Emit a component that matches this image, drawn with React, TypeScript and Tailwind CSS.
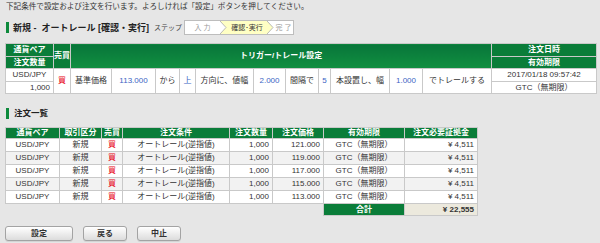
import React from "react";

const th = "border border-[#c9c9c9] bg-[#0a7d39] text-white font-bold text-center p-0";
const td = "border border-[#c9c9c9] bg-white text-center p-0";

function Steps() {
  return (
    <div className="ml-[2px] flex h-[15px] items-stretch border border-[#bdbdbd] bg-white text-[7px] leading-[13px]">
      <div className="flex w-[35px] items-center justify-center text-[#9a9a9a]">入 力</div>
      <svg width="7" height="13" viewBox="0 0 7 13" className="block">
        <rect x="0" y="0" width="7" height="13" fill="#ffffc4" />
        <polygon points="0,0 6,6.5 0,13" fill="#ffffff" />
        <polyline points="0,0 6,6.5 0,13" fill="none" stroke="#a8a8a8" strokeWidth="0.8" />
      </svg>
      <div className="flex w-[40px] items-center justify-center bg-[#ffffc4] text-[#333]">確認･実行</div>
      <svg width="7" height="13" viewBox="0 0 7 13" className="block">
        <rect x="0" y="0" width="7" height="13" fill="#ffffff" />
        <polygon points="0,0 6,6.5 0,13" fill="#ffffc4" />
        <polyline points="0,0 6,6.5 0,13" fill="none" stroke="#a8a8a8" strokeWidth="0.8" />
      </svg>
      <div className="flex w-[19px] items-center justify-center text-[#9a9a9a]">完 了</div>
    </div>
  );
}

function Btn({ label, w }: { label: string; w: string }) {
  return (
    <button
      className={`${w} h-[15px] rounded-[3px] border border-[#a3a3a3] bg-gradient-to-b from-[#ffffff] to-[#dcdcdc] text-[8px] font-bold leading-[13px] text-[#333] shadow-[0_1px_0_rgba(0,0,0,0.08)]`}
    >
      {label}
    </button>
  );
}

const prices = ["121.000", "119.000", "117.000", "115.000", "113.000"];

export default function App() {
  return (
    <div className="h-[243px] w-[600px] overflow-hidden bg-[#e6e6e6] font-['Liberation_Sans','Noto_Sans_CJK_JP',sans-serif] text-[#333]">
      <div className="h-[16px] pl-[6px] pt-[2px] text-[7.6px] leading-[10px]">
        下記条件で設定および注文を行います。よろしければ「設定」ボタンを押してください。
      </div>
      <div className="flex h-[23px] items-center pl-[6px]">
        <div className="h-[11px] w-[3px] bg-[#0d8a3c]" />
        <div className="ml-[4px] text-[9px] font-bold leading-[12px] text-[#222]">新規 -&nbsp; オートレール [確認・実行]</div>
        <div className="ml-[5px] text-[7px] leading-[10px] text-[#444]">ステップ</div>
        <Steps />
      </div>

      <div className="mt-[4px] pl-[5px]">
        <table className="w-[591px] table-fixed border-collapse text-[8px] leading-[10px]">
          <colgroup>
            {[48, 17, 41, 44, 24, 16, 58, 32, 33, 12, 59, 33, 69, 105].map((w, i) => (
              <col key={i} style={{ width: w }} />
            ))}
          </colgroup>
          <tbody>
            <tr className="h-[13px]">
              <th className={th}>通貨ペア</th>
              <th className={th} rowSpan={2}>売買</th>
              <th className={`${th} bg-gradient-to-b from-[#08763a] to-[#118f40]`} colSpan={11} rowSpan={2}>
                トリガー/トレール設定
              </th>
              <th className={th}>注文日時</th>
            </tr>
            <tr className="h-[12px]">
              <th className={th}>注文数量</th>
              <th className={th}>有効期限</th>
            </tr>
            <tr className="h-[13px]">
              <td className={td}>USD/JPY</td>
              <td className={`${td} text-[#e60012]`} rowSpan={2}>買</td>
              <td className={td} rowSpan={2}>基準価格</td>
              <td className={`${td} text-[#3b64c4]`} rowSpan={2}>113.000</td>
              <td className={td} rowSpan={2}>から</td>
              <td className={`${td} text-[#3b64c4]`} rowSpan={2}>上</td>
              <td className={td} rowSpan={2}>方向に、値幅</td>
              <td className={`${td} text-[#3b64c4]`} rowSpan={2}>2.000</td>
              <td className={td} rowSpan={2}>間隔で</td>
              <td className={`${td} text-[#3b64c4]`} rowSpan={2}>5</td>
              <td className={td} rowSpan={2}>本設置し、幅</td>
              <td className={`${td} text-[#3b64c4]`} rowSpan={2}>1.000</td>
              <td className={td} rowSpan={2}>でトレールする</td>
              <td className={td}>2017/01/18 09:57:42</td>
            </tr>
            <tr className="h-[12px]">
              <td className={`${td} pr-[3px] text-right`}>1,000</td>
              <td className={td}>GTC（無期限）</td>
            </tr>
          </tbody>
        </table>
      </div>

      <div className="mt-[13px] flex h-[12px] items-center pl-[6px]">
        <div className="h-[11px] w-[3px] bg-[#0d8a3c]" />
        <div className="ml-[5px] text-[8.5px] font-bold leading-[12px] text-[#222]">注文一覧</div>
      </div>

      <div className="mt-[8px] pl-[5px]">
        <table className="w-[472px] table-fixed border-collapse text-[8px] leading-[10px]">
          <colgroup>
            {[54, 42, 21, 107, 43, 51, 81, 73].map((w, i) => (
              <col key={i} style={{ width: w }} />
            ))}
          </colgroup>
          <tbody>
            <tr className="h-[11px]">
              {["通貨ペア", "取引区分", "売買", "注文条件", "注文数量", "注文価格", "有効期限", "注文必要証拠金"].map((h) => (
                <th key={h} className={th}>{h}</th>
              ))}
            </tr>
            {prices.map((p, i) => {
              const bg = i % 2 === 1 ? "bg-[#f2f2f2]" : "bg-white";
              const c = `border border-[#c9c9c9] ${bg} p-0`;
              return (
                <tr key={p} className="h-[13px]">
                  <td className={`${c} text-center`}>USD/JPY</td>
                  <td className={`${c} text-center`}>新規</td>
                  <td className={`${c} text-center text-[#e60012]`}>買</td>
                  <td className={`${c} text-center`}>オートレール(逆指値)</td>
                  <td className={`${c} pr-[3px] text-right`}>1,000</td>
                  <td className={`${c} pr-[3px] text-right`}>{p}</td>
                  <td className={`${c} text-center`}>GTC（無期限）</td>
                  <td className={`${c} pr-[3px] text-right`}>¥ 4,511</td>
                </tr>
              );
            })}
            <tr className="h-[12px]">
              <td colSpan={6} className="border-0 p-0" />
              <td className={th}>合計</td>
              <td className="border border-[#c9c9c9] bg-[#ece9dd] p-0 pr-[3px] text-right font-bold">¥ 22,555</td>
            </tr>
          </tbody>
        </table>
      </div>

      <div className="mt-[10px] flex gap-[10px] pl-[5px]">
        <Btn label="設定" w="w-[68px]" />
        <Btn label="戻る" w="w-[44px]" />
        <Btn label="中止" w="w-[44px]" />
      </div>
    </div>
  );
}
